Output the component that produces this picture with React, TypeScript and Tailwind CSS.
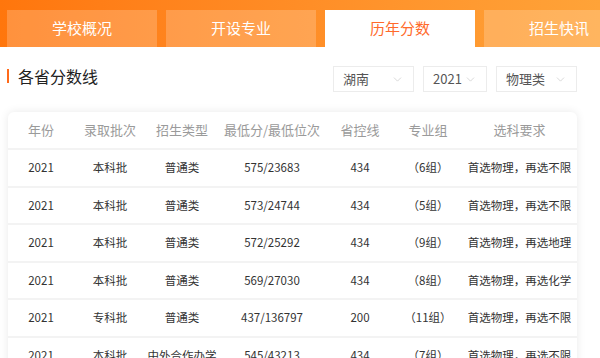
import React from "react";
import { ChevronDown } from "lucide-react";

const tabs = ["学校概况", "开设专业", "历年分数", "招生快讯"];

const heads = ["年份", "录取批次", "招生类型", "最低分/最低位次", "省控线", "专业组", "选科要求"];

const rows = [
  ["2021", "本科批", "普通类", "575/23683", "434", "（6组）", "首选物理，再选不限"],
  ["2021", "本科批", "普通类", "573/24744", "434", "（5组）", "首选物理，再选不限"],
  ["2021", "本科批", "普通类", "572/25292", "434", "（9组）", "首选物理，再选地理"],
  ["2021", "本科批", "普通类", "569/27030", "434", "（8组）", "首选物理，再选化学"],
  ["2021", "专科批", "普通类", "437/136797", "200", "（11组）", "首选物理，再选不限"],
  ["2021", "本科批", "中外合作办学", "545/43213", "434", "（7组）", "首选物理，再选不限"],
];

function Select({ label, w }: { label: string; w: string }) {
  return (
    <div
      className={`${w} h-[26px] flex items-center justify-between pl-[9px] pr-[9px] border border-[#ececec] text-[13px] text-[#555]`}
    >
      <span>{label}</span>
      <ChevronDown size={13} strokeWidth={1.2} color="#c4c4c4" />
    </div>
  );
}

export default function App() {
  return (
    <div
      className="w-[600px] h-[358px] overflow-hidden bg-white"
      style={{ fontFamily: '"Noto Sans CJK SC", "Noto Sans", sans-serif' }}
    >
      <div className="flex gap-[9px] pt-[10px] pl-[7px] bg-gradient-to-r from-[#ff760c] to-[#ffa338]">
        {tabs.map((t, i) => (
          <div
            key={t}
            className={`w-[150px] shrink-0 h-[37px] flex items-center justify-center text-[15px] ${
              i === 2 ? "bg-white text-[#ff6a2b]" : "bg-white/20 text-white"
            }`}
          >
            {t}
          </div>
        ))}
      </div>

      <div className="pl-[8px] pr-[23px]">
        <div className="flex items-center justify-between mt-[19px] h-[26px]">
          <div className="flex items-center pb-[6px]">
            <div className="w-[2px] h-[14px] bg-[#ff6a1a] -ml-[1px]" />
            <span className="ml-[9px] text-[16px] text-[#222]">各省分数线</span>
          </div>
          <div className="flex gap-[9px]">
            <Select label="湖南" w="w-[81px]" />
            <Select label="2021" w="w-[64px]" />
            <Select label="物理类" w="w-[81px]" />
          </div>
        </div>

        <div className="mt-[20px] rounded-[6px] bg-white shadow-[0_0_10px_rgba(0,0,0,0.09)]">
          <div className="grid grid-cols-[66px_72px_72px_108px_68px_68px_115px] h-[38px] items-center text-[13px] text-[#9a9a9a] text-center border-b-2 border-[#f3f3f3]">
            {heads.map((h) => (
              <div key={h}>{h}</div>
            ))}
          </div>
          {rows.map((r, i) => (
            <div
              key={i}
              className="grid grid-cols-[66px_72px_72px_108px_68px_68px_115px] h-[37.5px] items-center text-[11.5px] text-[#333] text-center border-b-2 border-[#f3f3f3]"
            >
              {r.map((c, j) => (
                <div key={j} className="whitespace-nowrap">
                  {c}
                </div>
              ))}
            </div>
          ))}
        </div>
      </div>
    </div>
  );
}
